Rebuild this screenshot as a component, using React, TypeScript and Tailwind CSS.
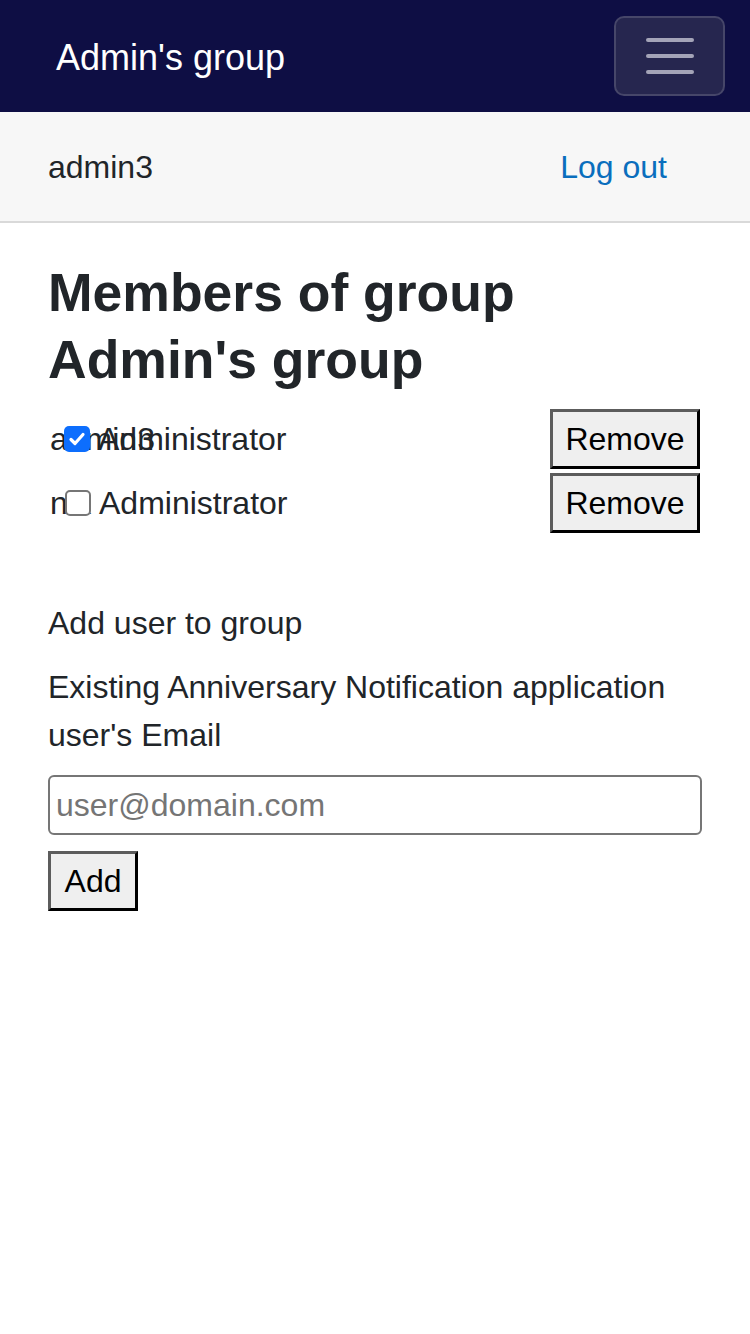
import React from "react";

function Check({ checked }: { checked: boolean }) {
  if (checked) {
    return (
      <span className="relative z-10 flex h-[26px] w-[26px] shrink-0 items-center justify-center rounded-[5px] bg-[#0d6efd]">
        <svg width="20" height="20" viewBox="0 0 20 20" fill="none">
          <path d="M4 10.5 L8 14.5 L16 5.5" stroke="white" strokeWidth="3.2" strokeLinecap="round" strokeLinejoin="round" />
        </svg>
      </span>
    );
  }
  return <span className="relative z-10 block h-[26px] w-[26px] shrink-0 rounded-[5px] border-2 border-[#767676] bg-white" />;
}

function Btn({ children, w }: { children: React.ReactNode; w: string }) {
  return (
    <button
      className={`flex h-[60px] items-center justify-center border-[3px] border-t-[#5c5c5c] border-l-[#5c5c5c] border-r-black border-b-black bg-[#efefef] text-[32px] leading-[48px] text-black ${w}`}
    >
      {children}
    </button>
  );
}

function Row({ name, checked, mt }: { name: string; checked: boolean; mt: string }) {
  return (
    <div className={`mr-[2px] flex h-[60px] items-center justify-between ${mt}`}>
      <div className="relative flex items-center text-[32px] text-[#212529]">
        <span className="absolute left-[2px] top-1/2 z-0 -translate-y-1/2 whitespace-nowrap leading-[48px]">{name}</span>
        <span className={checked ? "ml-[16px]" : "ml-[17px]"}>
          <Check checked={checked} />
        </span>
        <span className="relative z-0 ml-[8px] leading-[48px]">Administrator</span>
      </div>
      <Btn w="w-[150px]">Remove</Btn>
    </div>
  );
}

export default function App() {
  return (
    <div className="min-h-[1334px] w-[750px] bg-white" style={{ fontFamily: '"Liberation Sans", Arial, sans-serif' }}>
      <nav className="flex h-[112px] items-center justify-between bg-[#0e0e44] pl-[56px] pr-[25px]">
        <span className="pt-[4px] text-[36px] leading-none text-white">Admin's group</span>
        <button className="flex h-[80px] w-[111px] flex-col items-center justify-center gap-[12px] rounded-[10px] border-2 border-white/15 bg-[#26264f]">
          <span className="block h-[4px] w-[48px] rounded-full bg-[#a4a4b8]" />
          <span className="block h-[4px] w-[48px] rounded-full bg-[#a4a4b8]" />
          <span className="block h-[4px] w-[48px] rounded-full bg-[#a4a4b8]" />
        </button>
      </nav>
      <div className="flex h-[111px] items-center justify-between border-b-2 border-[#d9d9d9] bg-[#f7f7f7] pl-[48px] pr-[83px] text-[32px]">
        <span className="text-[#212529]">admin3</span>
        <span className="text-[#0a6ebd]">Log out</span>
      </div>
      <main className="px-[48px]">
        <h3 className="mt-[36px] mb-[16px] text-[53.5px] font-bold leading-[67px] text-[#212529]">
          Members of group
          <br />
          Admin's group
        </h3>
        <Row name="admin3" checked={true} mt="" />
        <Row name="nik" checked={false} mt="mt-[4px]" />
        <p className="mt-[66px] text-[32px] leading-[48px] text-[#212529]">Add user to group</p>
        <p className="mt-[16px] text-[32px] leading-[48px] text-[#212529]">
          Existing Anniversary Notification application user's Email
        </p>
        <input
          type="text"
          placeholder="user@domain.com"
          className="mt-[16px] block h-[60px] w-full rounded-[6px] border-2 border-[#767676] bg-white px-[6px] text-[32px] text-[#212529] placeholder:text-[#757575] outline-none"
        />
        <div className="mt-[16px]">
          <Btn w="w-[90px]">Add</Btn>
        </div>
      </main>
    </div>
  );
}
